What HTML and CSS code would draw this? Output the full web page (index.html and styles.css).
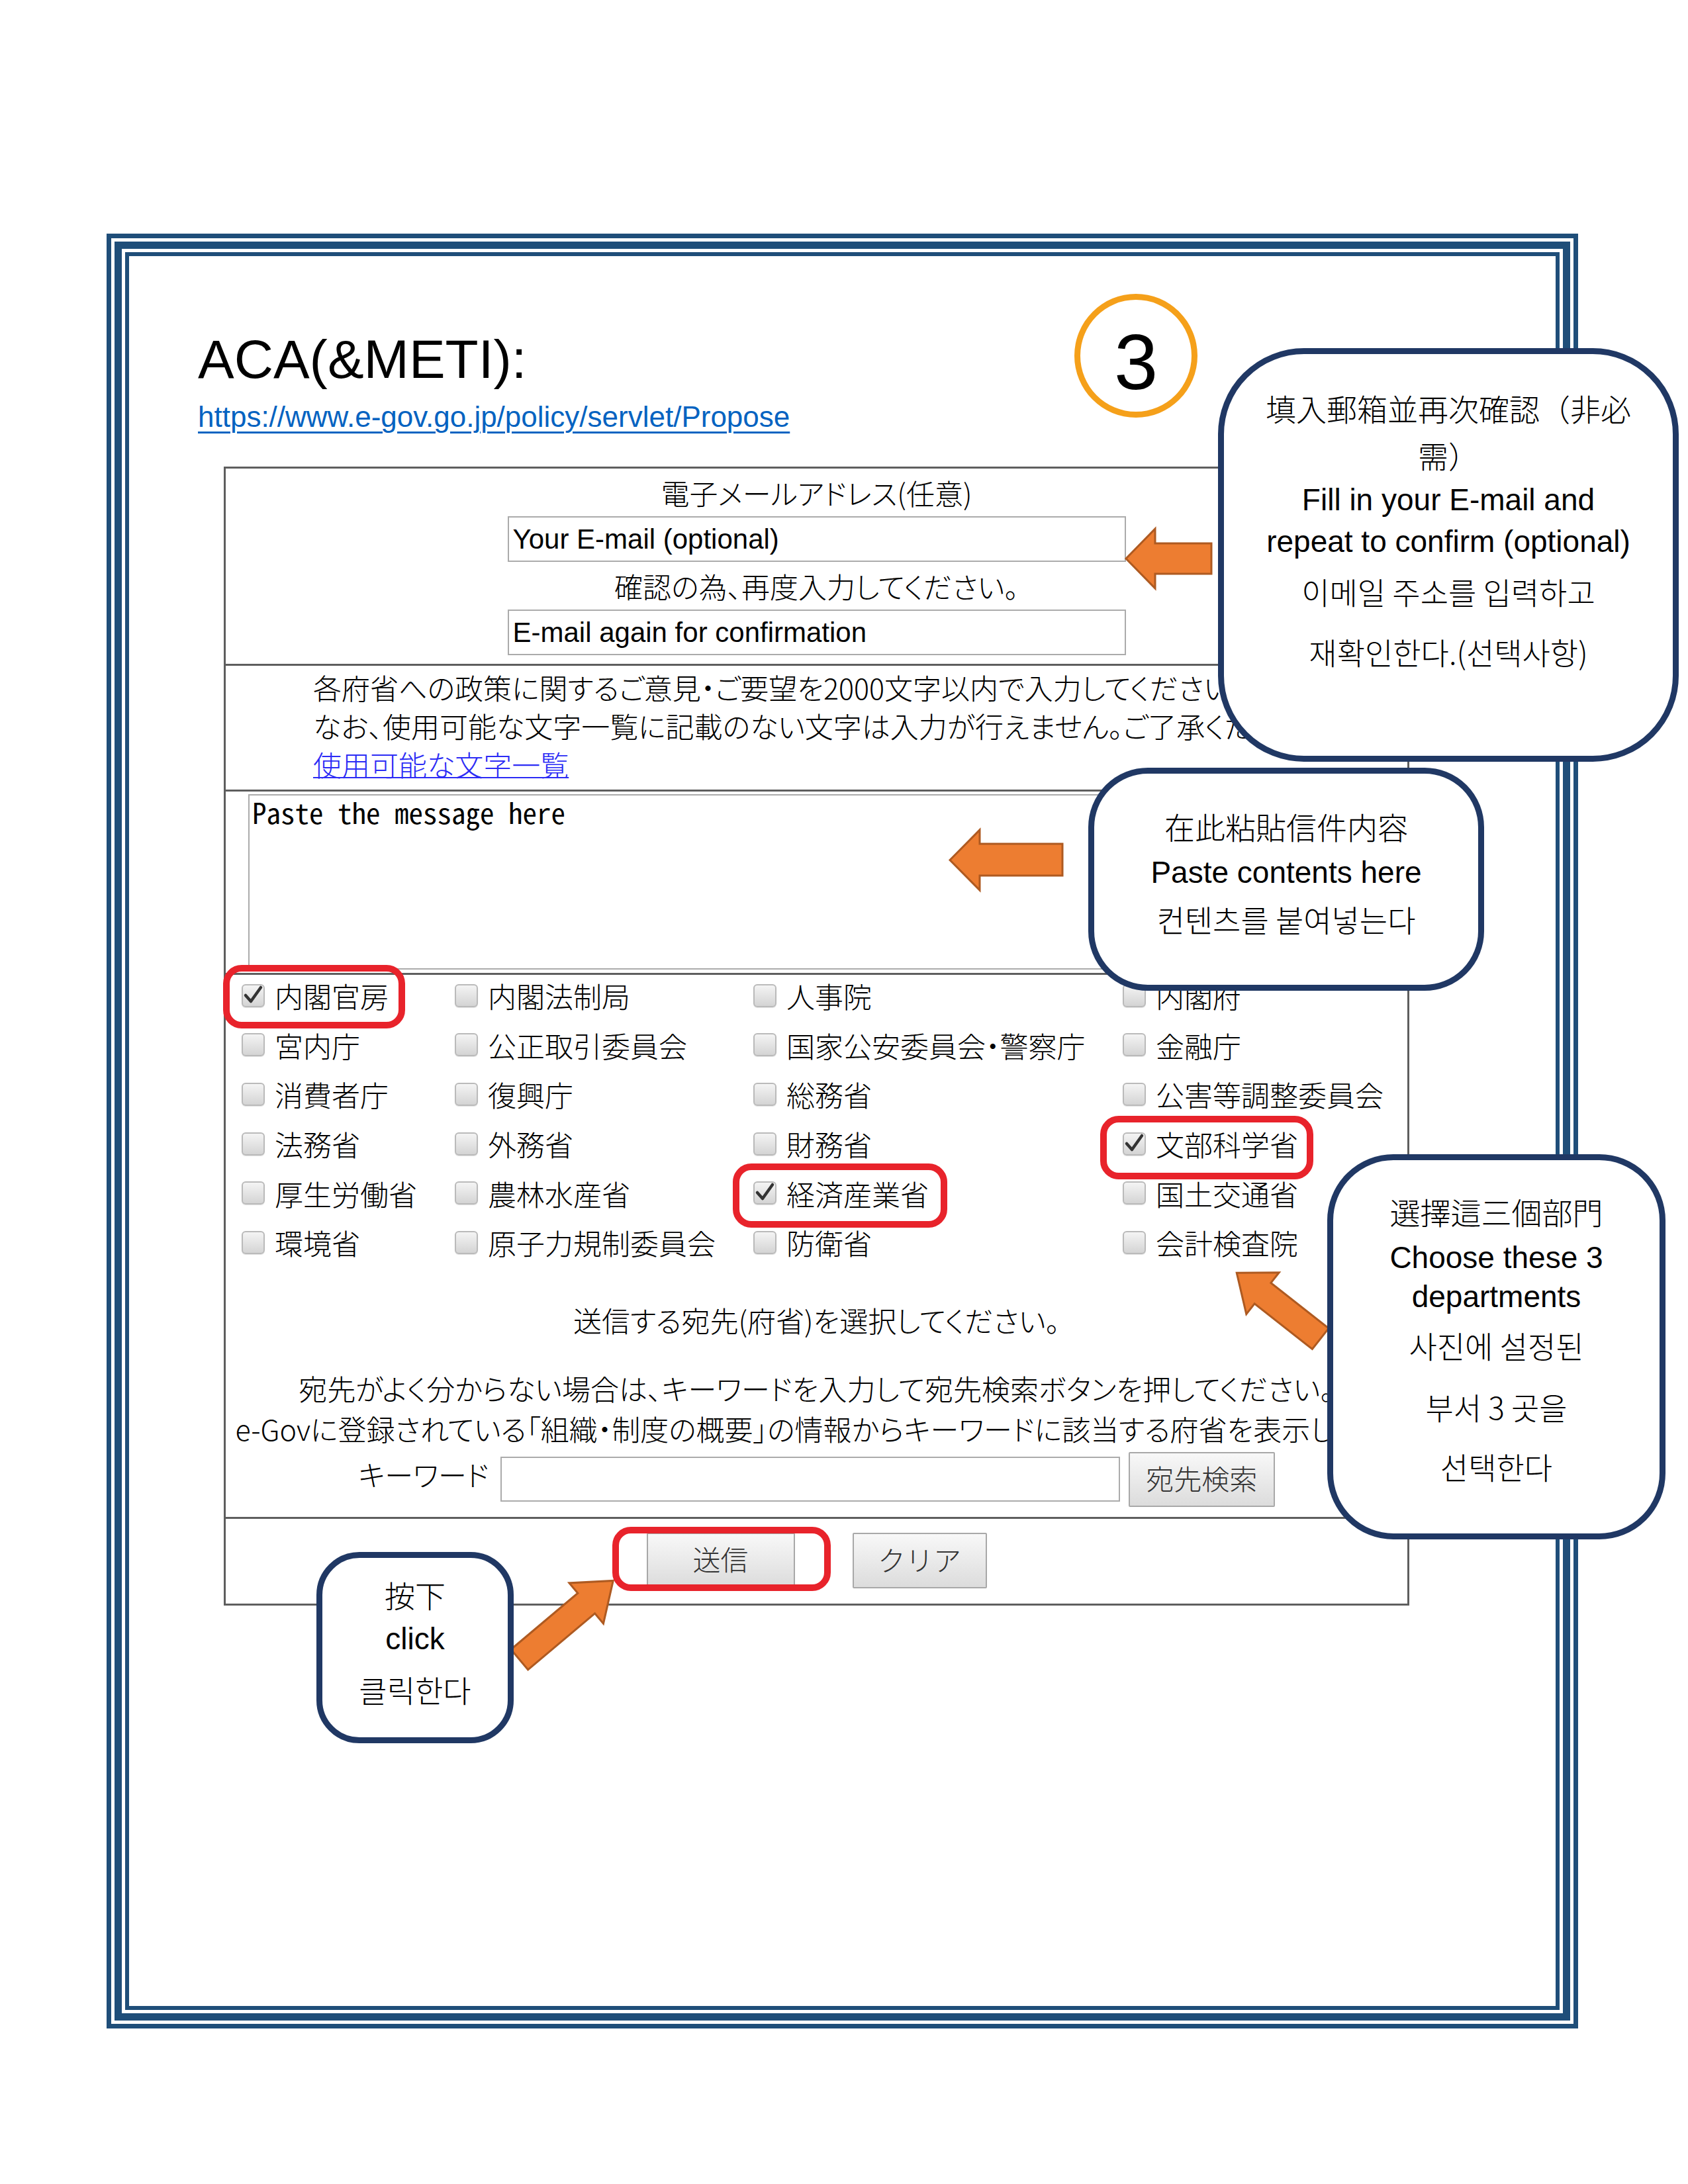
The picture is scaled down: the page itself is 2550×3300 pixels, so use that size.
FILE: index.html
```html
<!DOCTYPE html>
<html lang="ja">
<head>
<meta charset="utf-8">
<title>ACA(&amp;METI)</title>
<link rel="stylesheet" href="styles.css">
</head>
<body>
<div class="page">
  <div class="frame">
    <div class="frame-band">
      <div class="frame-inner">
        <h1 class="title">ACA(&amp;METI):</h1>
        <a class="url" href="#">https://www.e-gov.go.jp/policy/servlet/Propose</a>

        <div class="form">
          <section class="sec sec-mail">
            <div class="lbl">電子メールアドレス(任意)</div>
            <input class="field" type="text" value="Your E-mail (optional)">
            <div class="lbl">確認の為、再度入力してください。</div>
            <input class="field" type="text" value="E-mail again for confirmation">
          </section>

          <section class="sec sec-note">
            <p>各府省への政策に関するご意見・ご要望を2000文字以内で入力してください。</p>
            <p>なお、使用可能な文字一覧に記載のない文字は入力が行えません。ご了承ください。</p>
            <p><a class="jlink" href="#">使用可能な文字一覧</a></p>
          </section>

          <section class="sec sec-msg">
            <textarea class="msg">Paste the message here</textarea>
          </section>

          <section class="sec sec-dest">
            <div class="grid">
              <div class="opt"><span class="cb on"><svg viewBox="0 0 35 35"><path d="M6 17 L14 26 L29 5"/></svg></span>内閣官房</div>
              <div class="opt"><span class="cb"></span>内閣法制局</div>
              <div class="opt"><span class="cb"></span>人事院</div>
              <div class="opt"><span class="cb"></span>内閣府</div>

              <div class="opt"><span class="cb"></span>宮内庁</div>
              <div class="opt"><span class="cb"></span>公正取引委員会</div>
              <div class="opt"><span class="cb"></span>国家公安委員会・警察庁</div>
              <div class="opt"><span class="cb"></span>金融庁</div>

              <div class="opt"><span class="cb"></span>消費者庁</div>
              <div class="opt"><span class="cb"></span>復興庁</div>
              <div class="opt"><span class="cb"></span>総務省</div>
              <div class="opt"><span class="cb"></span>公害等調整委員会</div>

              <div class="opt"><span class="cb"></span>法務省</div>
              <div class="opt"><span class="cb"></span>外務省</div>
              <div class="opt"><span class="cb"></span>財務省</div>
              <div class="opt"><span class="cb on"><svg viewBox="0 0 35 35"><path d="M6 17 L14 26 L29 5"/></svg></span>文部科学省</div>

              <div class="opt"><span class="cb"></span>厚生労働省</div>
              <div class="opt"><span class="cb"></span>農林水産省</div>
              <div class="opt"><span class="cb on"><svg viewBox="0 0 35 35"><path d="M6 17 L14 26 L29 5"/></svg></span>経済産業省</div>
              <div class="opt"><span class="cb"></span>国土交通省</div>

              <div class="opt"><span class="cb"></span>環境省</div>
              <div class="opt"><span class="cb"></span>原子力規制委員会</div>
              <div class="opt"><span class="cb"></span>防衛省</div>
              <div class="opt"><span class="cb"></span>会計検査院</div>
            </div>
            <p class="c1">送信する宛先(府省)を選択してください。</p>
            <p class="c2 first">宛先がよく分からない場合は、キーワードを入力して宛先検索ボタンを押してください。</p>
            <p class="c2">e-Govに登録されている「組織・制度の概要」の情報からキーワードに該当する府省を表示します。</p>
            <div class="kw">
              <span class="kw-lbl">キーワード</span>
              <input class="kw-in" type="text" value="">
              <button class="btn btn-search" type="button">宛先検索</button>
            </div>
          </section>

          <section class="sec sec-btn">
            <button class="btn btn-send" type="button">送信</button>
            <button class="btn btn-clear" type="button">クリア</button>
          </section>
        </div>
      </div>
    </div>
  </div>

  <!-- annotations -->
  <div class="step"><span>3</span></div>

  <svg class="arrow a1" viewBox="0 0 133 94"><polygon points="2,47 46,2 46,24 131,24 131,70 46,70 46,92"/></svg>
  <svg class="arrow a2" viewBox="0 0 174 95"><polygon points="2,47.5 47,2 47,23 172,23 172,71 47,71 47,93"/></svg>
  <svg class="arrow a3" viewBox="0 0 165 84"><polygon points="2,42 52,2 52,22 163,22 163,62 52,62 52,82"/></svg>
  <svg class="arrow a4" viewBox="0 0 189 84"><polygon points="2,42 55,2 55,22 187,22 187,62 55,62 55,82"/></svg>

  <div class="hl hl-1"></div>
  <div class="hl hl-2"></div>
  <div class="hl hl-3"></div>
  <div class="hl hl-4"></div>

  <div class="callout co1">
    <div class="ln tc h68">填入郵箱並再次確認（非必</div>
    <div class="ln tc h74">需）</div>
    <div class="ln en h62">Fill in your E-mail and</div>
    <div class="ln en h64">repeat to confirm (optional)</div>
    <div class="ln kr h86">이메일 주소를 입력하고</div>
    <div class="ln kr h96">재확인한다.(선택사항)</div>
  </div>

  <div class="callout co2">
    <div class="ln tc h70">在此粘貼信件内容</div>
    <div class="ln en h70">Paste contents here</div>
    <div class="ln kr h70">컨텐츠를 붙여넣는다</div>
  </div>

  <div class="callout co3">
    <div class="ln tc h70">選擇這三個部門</div>
    <div class="ln en h70">Choose these 3</div>
    <div class="ln en h48">departments</div>
    <div class="ln kr h98">사진에 설정된</div>
    <div class="ln kr h88">부서 3 곳을</div>
    <div class="ln kr h92">선택한다</div>
  </div>

  <div class="callout co4">
    <div class="ln tc h66">按下</div>
    <div class="ln en h68">click</div>
    <div class="ln kr h84">클릭한다</div>
  </div>
</div>
</body>
</html>
```

FILE: styles.css
```css
* { box-sizing: border-box; }

html, body {
  margin: 0;
  padding: 0;
  background: #ffffff;
}

body {
  font-family: "Noto Sans CJK JP", sans-serif;
  color: #000;
}

.page {
  position: relative;
  width: 2550px;
  height: 3300px;
  padding: 353px 0 0 161px;
  overflow: hidden;
}

/* ---------- triple blue frame ---------- */
.frame {
  width: 2223px;
  height: 2712px;
  border: 7px solid #1f4e79;
  padding: 5px;
}
.frame-band {
  height: 100%;
  border: 11px solid #1f4e79;
  padding: 5px;
}
.frame-inner {
  height: 100%;
  border: 6px solid #1f4e79;
  padding-top: 115px;
}

/* ---------- heading ---------- */
.title {
  margin: 0 0 0 104px;
  font: 400 82px/82px "Liberation Sans", Arial, sans-serif;
  color: #000;
}
.url {
  display: block;
  width: max-content;
  margin: 21px 0 0 104px;
  font: 400 44px/50px "Liberation Sans", Arial, sans-serif;
  color: #0563c1;
  text-decoration: underline;
  text-decoration-thickness: 3px;
  text-underline-offset: 7px;
}

/* ---------- form ---------- */
.form {
  width: 1791px;
  margin: 50px 0 0 143px;
  border: 3px solid #5e5e5e;
  font-size: 43px;
  font-weight: 300;
  font-feature-settings: "palt" 1;
}
.sec { border-top: 3px solid #5e5e5e; }
.sec:first-child { border-top: 0; }

.sec-mail {
  display: flex;
  flex-direction: column;
  align-items: center;
  padding-bottom: 13px;
}
.lbl {
  line-height: 72px;
  white-space: nowrap;
}
.field {
  display: block;
  width: 934px;
  height: 69px;
  border: 2px solid #ababab;
  padding: 0 6px;
  font: 400 42px/1 "Liberation Sans", Arial, sans-serif;
  color: #000;
  background: #fff;
  outline: none;
}

.sec-note {
  padding: 3px 0 10px 132px;
}
.sec-note p {
  margin: 0;
  line-height: 58px;
  white-space: nowrap;
}
.jlink {
  color: #2b2bf5;
  text-decoration: underline;
  text-decoration-thickness: 2px;
}

.sec-msg {
  padding: 4px 0 5px 34px;
}
.msg {
  display: block;
  width: 1717px;
  height: 265px;
  border: 2px solid #ababab;
  padding: 0 4px;
  resize: none;
  font: 400 43px/48px "Noto Sans Mono CJK JP", "Liberation Mono", monospace;
  color: #000;
  background: #fff;
  outline: none;
}

.sec-dest {
  padding-bottom: 15px;
}
.grid {
  display: grid;
  grid-template-columns: 322px 451px 558px auto;
  grid-auto-rows: 74.6px;
  padding-left: 24px;
  margin-top: -6px;
}
.opt {
  display: flex;
  align-items: center;
  gap: 15px;
  white-space: nowrap;
}
.cb {
  flex: none;
  position: relative;
  width: 35px;
  height: 35px;
  border: 2px solid #bababa;
  border-radius: 6px;
  background: linear-gradient(#f4f4f4, #d4d4d4);
  box-shadow: 0 1px 1px rgba(0,0,0,0.12);
}
.cb svg {
  position: absolute;
  left: -2px;
  top: -2px;
  width: 35px;
  height: 35px;
}
.cb svg path {
  fill: none;
  stroke: #333;
  stroke-width: 4.5;
  stroke-linecap: round;
  stroke-linejoin: round;
}

.c1, .c2 {
  margin: 0;
  text-align: center;
  white-space: nowrap;
}
.c1 {
  margin-top: 49px;
  line-height: 60px;
}
.c2 { line-height: 61px; }
.c2.first { margin-top: 43px; }

.kw {
  display: flex;
  justify-content: center;
  align-items: center;
  margin-top: 5px;
}
.kw-lbl {
  margin-right: 17px;
  padding-bottom: 16px;
  white-space: nowrap;
}
.kw-in {
  width: 936px;
  height: 68px;
  border: 2px solid #ababab;
  background: #fff;
  outline: none;
}

.btn {
  font-family: "Noto Sans CJK JP", sans-serif;
  font-size: 42px;
  font-weight: 300;
  color: #333;
  background: linear-gradient(#f8f8f8, #dcdcdc);
  border: 2px solid #a8a8a8;
  border-radius: 2px;
  padding: 0 0 4px;
  line-height: 1;
}
.btn-search {
  width: 221px;
  height: 83px;
  margin-left: 13px;
}

.sec-btn {
  display: flex;
  justify-content: center;
  gap: 87px;
  padding: 21px 0 23px;
}
.btn-send { width: 224px; height: 83px; }
.btn-clear { width: 203px; height: 84px; }

/* ---------- annotations ---------- */
.step {
  position: absolute;
  left: 1623px;
  top: 444px;
  width: 186px;
  height: 187px;
  border: 9px solid #f5a01a;
  border-radius: 50%;
  display: flex;
  align-items: center;
  justify-content: center;
  padding-top: 18px;
  font: 400 119px/119px "Liberation Sans", Arial, sans-serif;
  color: #000;
}

.arrow {
  position: absolute;
  overflow: visible;
}
.arrow polygon {
  fill: #ed7d31;
  stroke: #ae5a21;
  stroke-width: 3;
  stroke-linejoin: miter;
}
.a1 { left: 1699px; top: 797px; width: 133px; height: 94px; }
.a2 { left: 1433px; top: 1252px; width: 174px; height: 95px; }
.a3 { left: 1849px; top: 1931px; width: 165px; height: 84px; transform: rotate(38.2deg); }
.a4 { left: 761px; top: 2406px; width: 189px; height: 84px; transform: rotate(139.9deg); }

.hl {
  position: absolute;
  border: 10px solid #e8232b;
  border-radius: 28px;
}
.hl-1 { left: 337px; top: 1458px; width: 275px; height: 96px; }
.hl-2 { left: 1107px; top: 1758px; width: 324px; height: 97px; }
.hl-3 { left: 1662px; top: 1686px; width: 322px; height: 96px; }
.hl-4 { left: 925px; top: 2307px; width: 330px; height: 97px; }

.callout {
  position: absolute;
  border: 9px solid #203864;
  background: #fff;
  text-align: center;
  color: #000;
}
.co1 { left: 1840px; top: 526px; width: 696px; height: 625px; border-radius: 130px; padding-top: 47px; }
.co2 { left: 1644px; top: 1160px; width: 598px; height: 337px; border-radius: 90px; padding-top: 44px; }
.co3 { left: 2005px; top: 1744px; width: 511px; height: 582px; border-radius: 100px; padding-top: 42px; }
.co4 { left: 478px; top: 2345px; width: 298px; height: 289px; border-radius: 65px; padding-top: 22px; }

.ln { white-space: nowrap; font-size: 46px; }
.tc { font-family: "Noto Sans CJK TC", "Noto Sans CJK JP", sans-serif; font-weight: 300; }
.en { font-family: "Liberation Sans", Arial, sans-serif; font-weight: 400; }
.kr { font-family: "Noto Sans CJK KR", sans-serif; font-weight: 300; }

.h48 { line-height: 48px; }
.h62 { line-height: 62px; }
.h64 { line-height: 64px; }
.h66 { line-height: 66px; }
.h68 { line-height: 68px; }
.h70 { line-height: 70px; }
.h74 { line-height: 74px; }
.h84 { line-height: 84px; }
.h86 { line-height: 86px; }
.h88 { line-height: 88px; }
.h92 { line-height: 92px; }
.h96 { line-height: 96px; }
.h98 { line-height: 98px; }
```
